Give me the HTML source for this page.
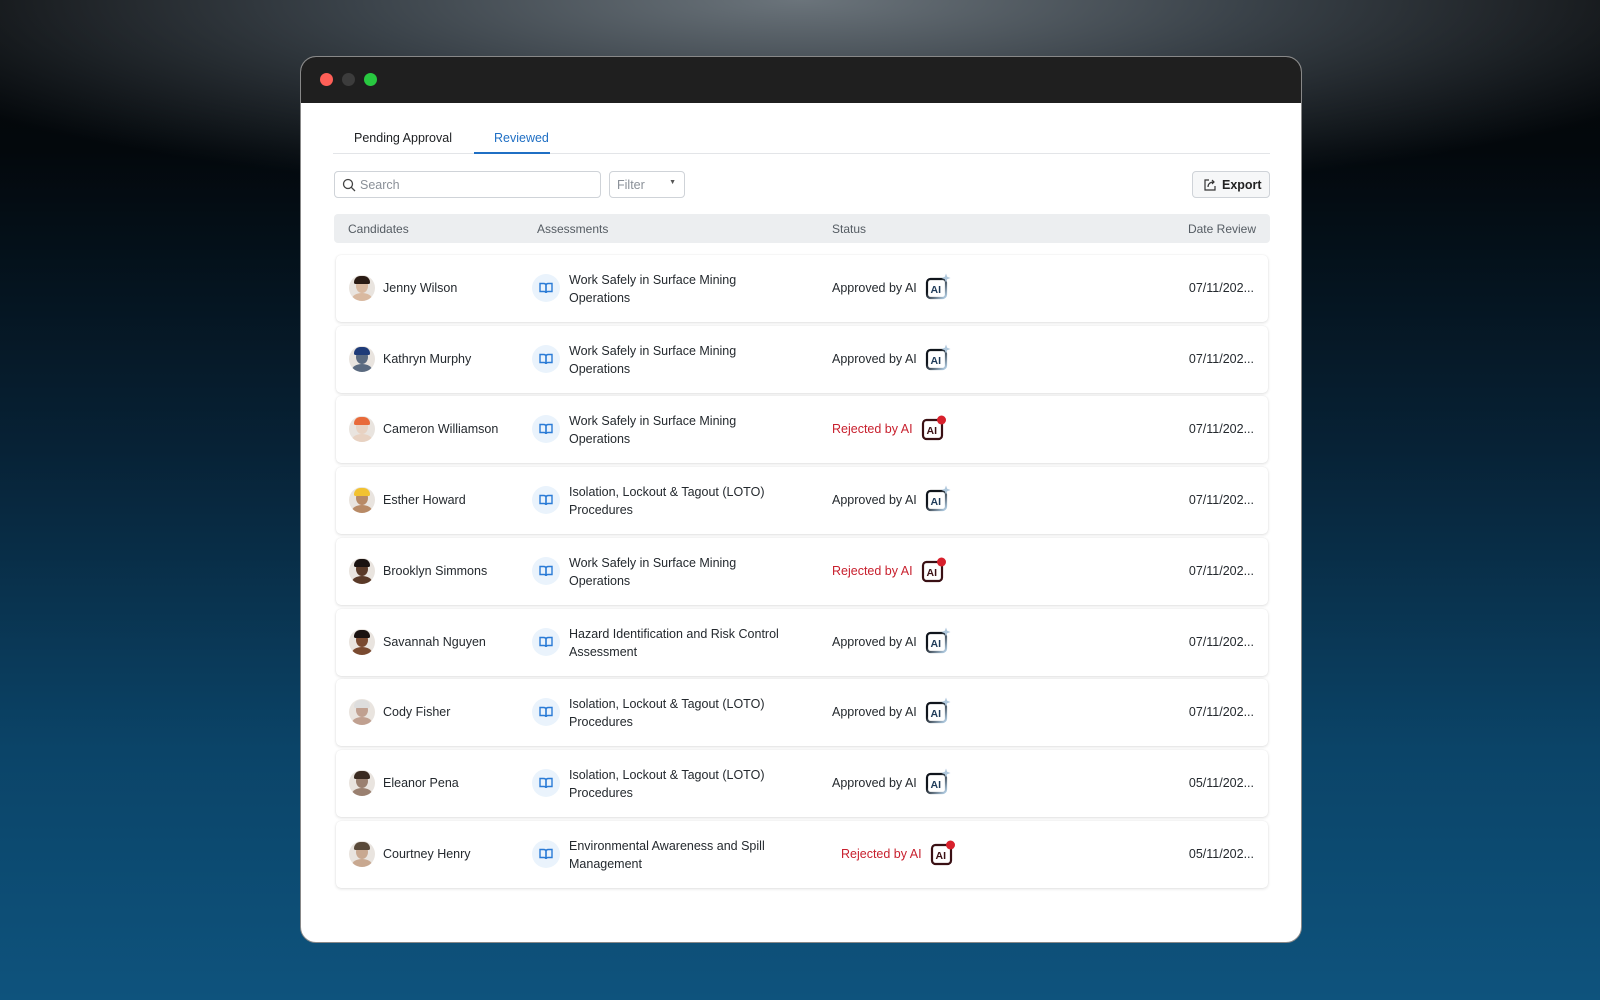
<!DOCTYPE html>
<html><head><meta charset="utf-8"><style>
*{box-sizing:border-box;margin:0;padding:0}
body{width:1600px;height:1000px;overflow:hidden;font-family:"Liberation Sans",sans-serif;position:relative;
background:radial-gradient(ellipse 1000px 200px at 800px 0px,#6b747b 0%,#3a4249 45%,rgba(0,0,0,0) 100%),linear-gradient(180deg,#050607 0%,#03080c 15%,#072236 45%,#0b4468 75%,#0e537d 100%);}
.win{position:absolute;left:300px;top:56px;width:1002px;height:887px;background:#fff;border-radius:16px;overflow:hidden;border:1px solid #888;}
.tb{height:46px;background:#1f1f1f;position:relative}
.dot{position:absolute;top:16px;width:13px;height:13px;border-radius:50%}
.tabs{position:absolute;left:32px;top:70px;width:937px;height:27px;border-bottom:1px solid #e3e5e8;font-size:12.5px}
.tabs span{position:absolute;top:4px}
.search{position:absolute;left:33px;top:114px;width:267px;height:27px;border:1px solid #cfd3d8;border-radius:4px;font-size:12.5px;color:#8a9098;padding:6px 0 0 25px}
.filter{position:absolute;left:308px;top:114px;width:76px;height:27px;border:1px solid #cfd3d8;border-radius:4px;font-size:12.5px;color:#8a9098;padding:6px 0 0 7px}
.export{position:absolute;left:891px;top:114px;width:78px;height:27px;border:1px solid #cfd3d8;border-radius:4px;background:#f6f7f8;font-size:12.5px;font-weight:bold;color:#222;padding:6px 0 0 29px}
.head{position:absolute;left:33px;top:157px;width:936px;height:29px;background:#eceef0;border-radius:4px;font-size:12px;color:#555c63}
.head span{position:absolute;top:8px}
.row{position:absolute;left:35px;width:932px;height:67px;background:#fff;border-radius:5px;box-shadow:0 1px 3px rgba(0,0,0,.12),0 0 1px rgba(0,0,0,.1);font-size:12.5px;color:#24292e}
.av{position:absolute;left:13px;top:20px;width:26px;height:26px;border-radius:50%;overflow:hidden}
.nm{position:absolute;left:47px;top:26px}
.bk{position:absolute;left:196px;top:19px;width:28px;height:28px;border-radius:50%;background:#eaf3fc}
.as{position:absolute;left:233px;top:16px;line-height:18px;width:220px}
.st{position:absolute;left:496px;top:26px}
.rej{color:#c8202e}
.ai{position:absolute;top:18px}
.dt{position:absolute;right:14px;top:26px}
</style></head><body>
<div class="win">
<div class="tb"><div class="dot" style="left:19px;background:#fe5f57"></div><div class="dot" style="left:41px;background:#3c3c3c"></div><div class="dot" style="left:63px;background:#28c840"></div></div>
<div class="tabs"><span style="left:21px;color:#1d1f22">Pending Approval</span><span style="left:161px;color:#1f6fc4">Reviewed</span><div style="position:absolute;left:141px;bottom:-1px;width:76px;height:2px;background:#1f6fc4"></div></div>
<div class="search"><svg style="position:absolute;left:7px;top:6px" width="14" height="14" viewBox="0 0 14 14"><circle cx="6" cy="6" r="4.5" fill="none" stroke="#444" stroke-width="1.3"/><path d="M9.3 9.3L13 13" stroke="#444" stroke-width="1.3"/></svg>Search</div>
<div class="filter">Filter<span style="position:absolute;right:8px;top:7px;font-size:7px;color:#555">▼</span></div>
<div class="export"><svg style="position:absolute;left:10px;top:6px" width="14" height="14" viewBox="0 0 14 14" fill="none" stroke="#333" stroke-width="1.2"><path d="M6 2H2v10h10V8"/><path d="M5 9c0-3 2-5 6-5M9 2l2 2-2 2"/></svg>Export</div>
<div class="head"><span style="left:14px">Candidates</span><span style="left:203px">Assessments</span><span style="left:498px">Status</span><span style="right:14px">Date Review</span></div>
<div id="rows"></div>
</div>
<script>
var d=[["Jenny Wilson","Work Safely in Surface Mining<br>Operations",0,"07/11/202...","#d9b9a0","#2a1b14"],
["Kathryn Murphy","Work Safely in Surface Mining<br>Operations",0,"07/11/202...","#5a6a80","#1e3b78"],
["Cameron Williamson","Work Safely in Surface Mining<br>Operations",1,"07/11/202...","#e8d2c2","#e86a3a"],
["Esther Howard","Isolation, Lockout &amp; Tagout (LOTO)<br>Procedures",0,"07/11/202...","#b88a66","#f2c230"],
["Brooklyn Simmons","Work Safely in Surface Mining<br>Operations",1,"07/11/202...","#5a3a28","#1a1210"],
["Savannah Nguyen","Hazard Identification and Risk Control<br>Assessment",0,"07/11/202...","#7a4a30","#1a1210"],
["Cody Fisher","Isolation, Lockout &amp; Tagout (LOTO)<br>Procedures",0,"07/11/202...","#c0a090","#ddd"],
["Eleanor Pena","Isolation, Lockout &amp; Tagout (LOTO)<br>Procedures",0,"05/11/202...","#9a8070","#3a2a20"],
["Courtney Henry","Environmental Awareness and Spill<br>Management",1,"05/11/202...","#c8a890","#5a4a3a"]];
var h="";
d.forEach(function(r,i){
var top=198+i*70.7;var rej=r[2];var sx=(i==8)?505:496;
var ai=rej?'<svg class="ai" style="left:'+(sx+88)+'px" width="28" height="28" viewBox="0 0 28 28"><rect x="3" y="6" width="19" height="19" rx="3.5" fill="none" stroke="#3a1014" stroke-width="2.2"/><text x="6.5" y="20" font-size="10.5" font-weight="bold" font-family="Liberation Sans" fill="#3a1014">AI</text><circle cx="21.5" cy="6" r="4.5" fill="#d8202c"/></svg>'
:'<svg class="ai" style="left:'+(sx+92)+'px" width="28" height="28" viewBox="0 0 28 28"><defs><linearGradient id="g'+i+'" x1="0" y1="0" x2="1" y2="1"><stop offset="0.35" stop-color="#10151c"/><stop offset="1" stop-color="#b8d4ea"/></linearGradient></defs><rect x="3" y="6" width="19" height="19" rx="3.5" fill="none" stroke="url(#g'+i+')" stroke-width="2.2"/><text x="6.5" y="20" font-size="10.5" font-weight="bold" font-family="Liberation Sans" fill="#1e3a58">AI</text><path d="M22 0.5l1.2 3.3 3.3 1.2-3.3 1.2-1.2 3.3-1.2-3.3-3.3-1.2 3.3-1.2z" fill="#b0c8dc"/></svg>';
h+='<div class="row" style="top:'+top+'px"><div class="av" style="background:#e9e4df"><div style="position:absolute;left:7px;top:4px;width:12px;height:14px;border-radius:50%;background:'+r[4]+'"></div><div style="position:absolute;left:5px;top:1px;width:16px;height:8px;border-radius:8px 8px 2px 2px;background:'+r[5]+'"></div><div style="position:absolute;left:3px;top:18px;width:20px;height:12px;border-radius:50%;background:'+r[4]+'"></div></div><div class="nm">'+r[0]+'</div><div class="bk"><svg style="position:absolute;left:7px;top:7px" width="14" height="14" viewBox="0 0 14 14" fill="none" stroke="#2a7bd6" stroke-width="1.4"><path d="M1 2.5h3.5c1.5 0 2.5.8 2.5 2V12c0-.8-.8-1.5-2-1.5H1z"/><path d="M13 2.5H9.5C8 2.5 7 3.3 7 4.5V12c0-.8.8-1.5 2-1.5h4z"/></svg></div><div class="as">'+r[1]+'</div><div class="st'+(rej?' rej':'')+'" style="left:'+sx+'px">'+(rej?'Rejected by AI':'Approved by AI')+'</div>'+ai+'<div class="dt">'+r[3]+'</div></div>';
});
document.getElementById("rows").innerHTML=h;
</script>
</body></html>
